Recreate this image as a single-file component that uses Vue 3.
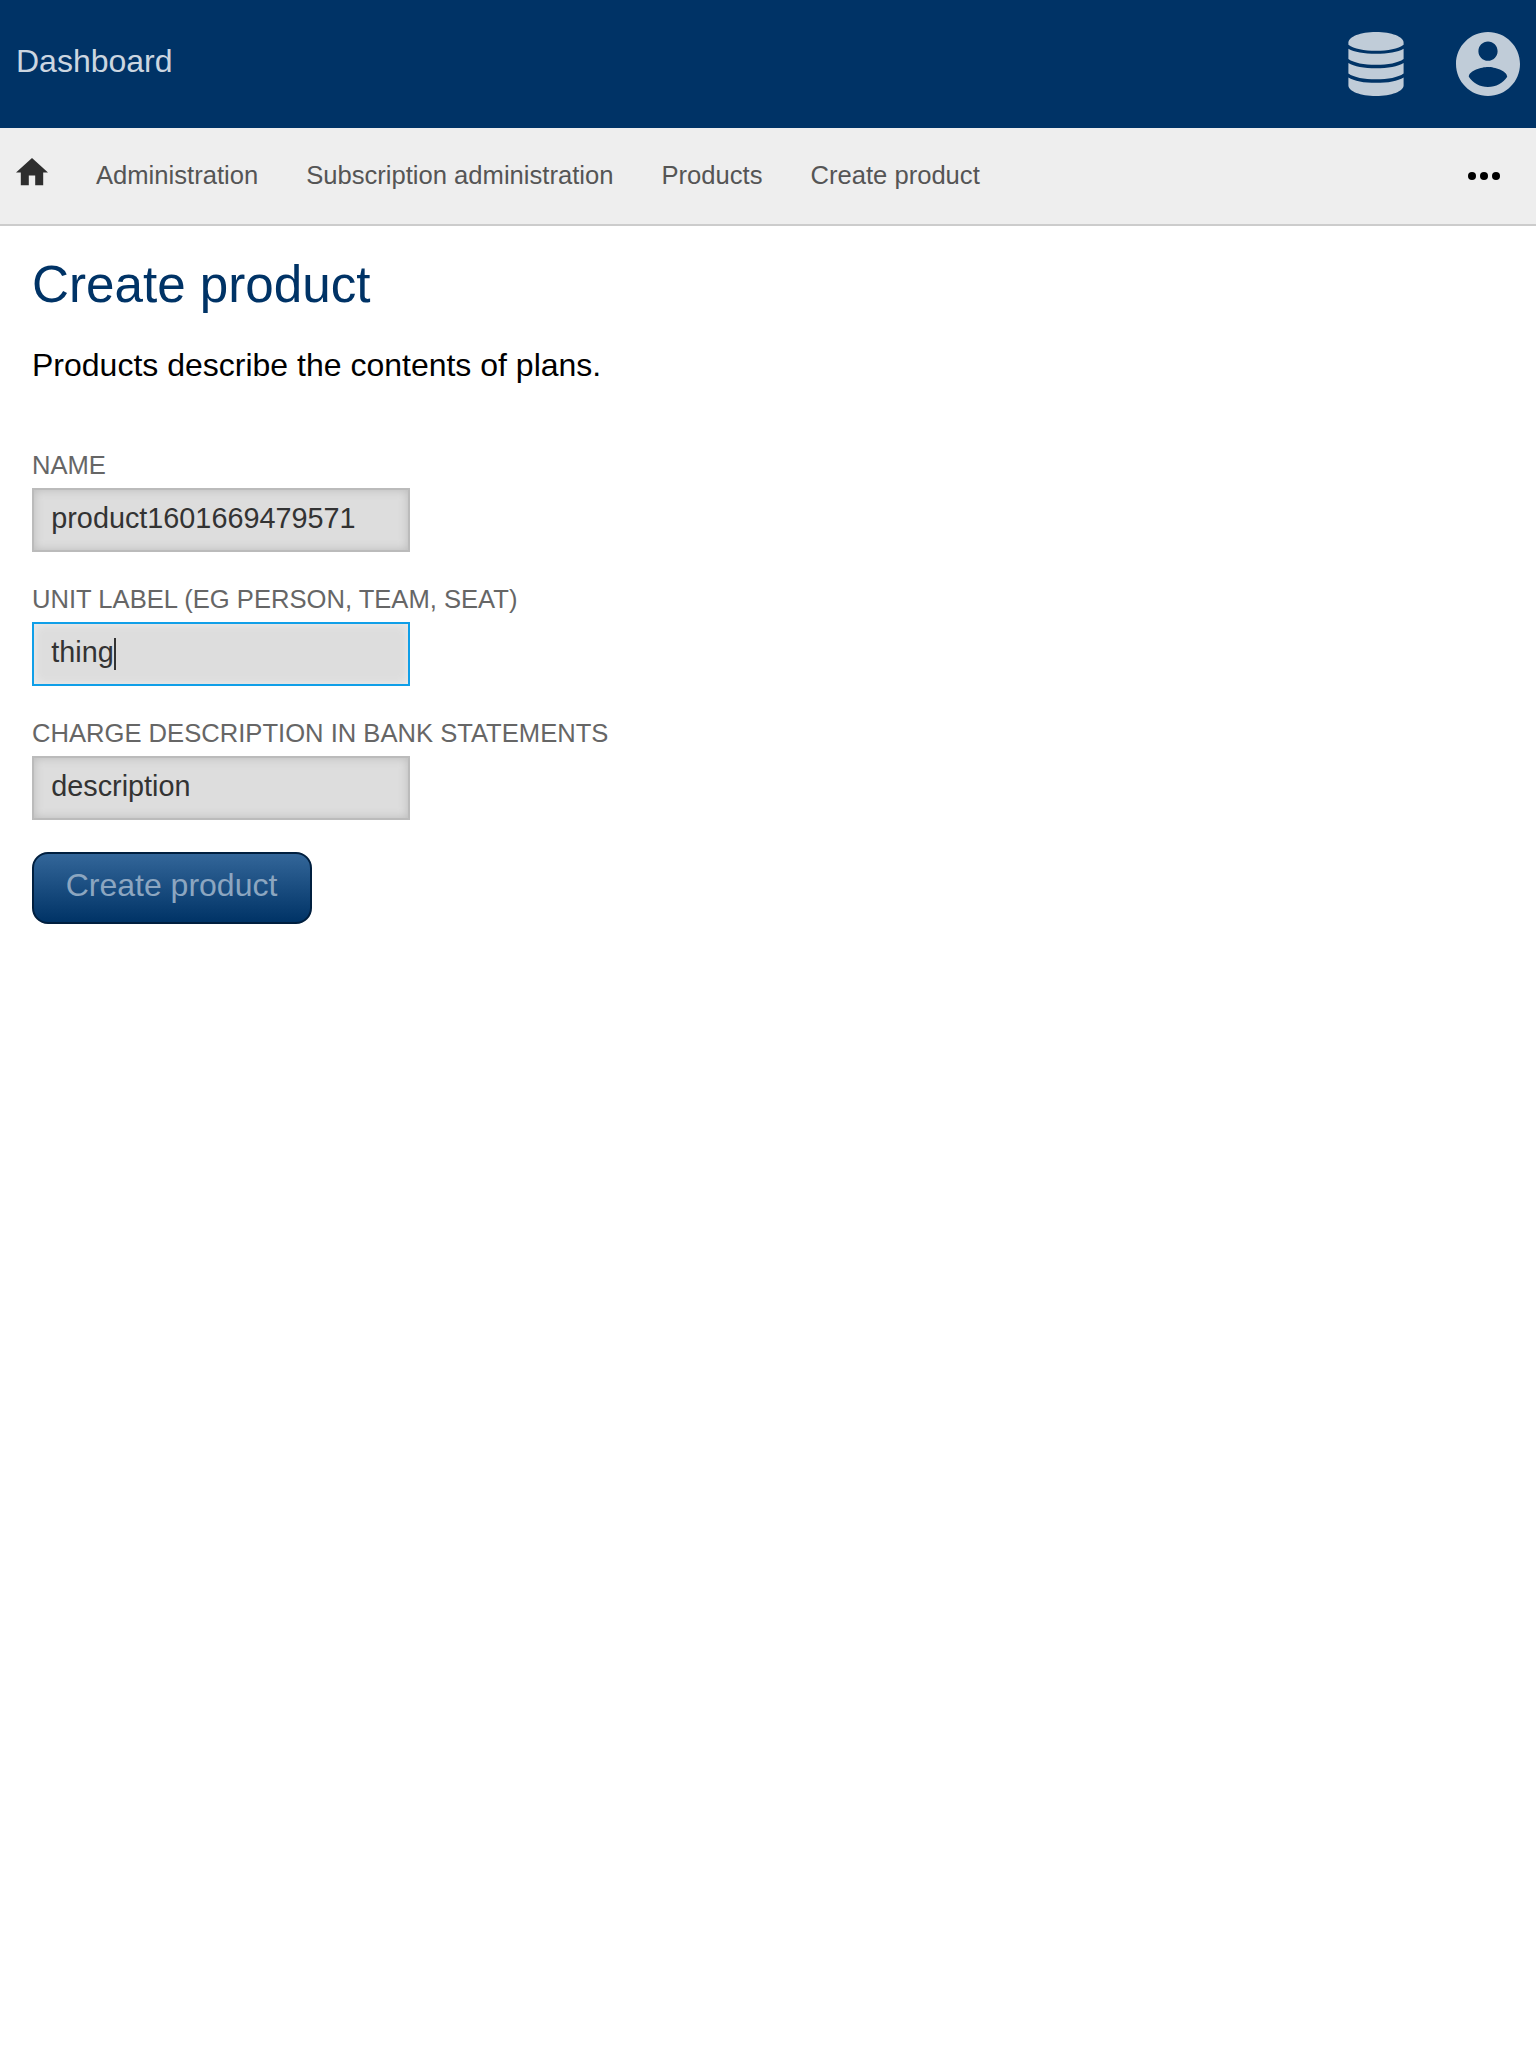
<script setup>
const crumbs = ['Administration', 'Subscription administration', 'Products', 'Create product']
const fields = [
  { id: 'name', label: 'Name', value: 'product1601669479571' },
  { id: 'unit', label: 'Unit label (eg person, team, seat)', value: 'thing', focused: true },
  { id: 'statement', label: 'Charge description in bank statements', value: 'description' },
]
</script>

<template>
  <div class="page">
    <header class="topbar">
      <a class="brand">Dashboard</a>
      <div class="tools">
        <svg class="db" viewBox="0 0 56 64" aria-hidden="true">
          <path d="M28 0C12.500 0 .4 4.800.4 10.500v2.200C6 16.700 16 18.700 28 18.700s22-2 27.600-6v-2.200C55.600 4.800 43.500 0 28 0z" />
          <path d="M.4 16.800C6 20 16 21.800 28 21.800s22-1.800 27.600-5V27C50 31 40 32.800 28 32.800S6 31 .4 27z" />
          <path d="M.4 31C6 34.500 16 36.300 28 36.300S50 34.500 55.600 31V41.500C50 45.500 40 47.300 28 47.300S6 45.500 .4 41.500z" />
          <path d="M.4 45.400C6 49 16 50.800 28 50.800s22-1.800 27.600-5.400V53.500C55.600 59.200 43.500 64 28 64S.4 59.200.4 53.500z" />
        </svg>
        <svg class="account" viewBox="2 2 20 20" aria-hidden="true">
          <path d="M12 2C6.480 2 2 6.480 2 12s4.480 10 10 10 10-4.480 10-10S17.520 2 12 2zm0 3c1.660 0 3 1.340 3 3s-1.340 3-3 3-3-1.340-3-3 1.340-3 3-3zm0 14.200c-2.500 0-4.710-1.280-6-3.220.03-1.990 4-3.080 6-3.080 1.990 0 5.970 1.090 6 3.080-1.290 1.940-3.500 3.220-6 3.220z" />
        </svg>
      </div>
    </header>
    <nav class="crumbs">
      <svg class="home" viewBox="2 3 20 17" aria-hidden="true">
        <path d="M10 20v-6h4v6h5v-8h3L12 3 2 12h3v8z" />
      </svg>
      <a v-for="c in crumbs" :key="c">{{ c }}</a>
      <svg class="more" viewBox="0 0 32 8" aria-hidden="true">
        <circle cx="4" cy="4" r="4" /><circle cx="16" cy="4" r="4" /><circle cx="28" cy="4" r="4" />
      </svg>
    </nav>
    <main>
      <h1>Create product</h1>
      <p>Products describe the contents of plans.</p>
      <form>
        <div v-for="f in fields" :key="f.id" class="field">
          <label>{{ f.label }}</label>
          <div class="input" :class="{ focused: f.focused }">{{ f.value }}<span v-if="f.focused" class="caret"></span></div>
        </div>
        <button type="button">Create product</button>
      </form>
    </main>
  </div>
</template>

<style>
body { margin: 0; background: #fff; }
</style>

<style scoped>
.page { min-height: 2048px; font-family: "Liberation Sans", Arial, sans-serif; font-size: 32px; color: #000; }
.topbar { box-sizing: border-box; height: 128px; padding: 32px 16px; display: flex; justify-content: space-between; background: #003366; }
.brand { line-height: 36px; padding-top: 11px; color: #ccd6e0; }
.tools { display: flex; gap: 52px; fill: #c0ccd8; }
.db { width: 56px; height: 64px; }
.account { width: 64px; height: 64px; }
.crumbs { box-sizing: border-box; height: 98px; padding: 0 36px 0 16px; display: flex; align-items: center; gap: 48px; background: #eee; border-bottom: 2px solid #ccc; font-size: 25.6px; color: #555; }
.crumbs a { line-height: 30px; padding-bottom: 2px; white-space: nowrap; }
.home { width: 32px; height: 27.2px; fill: #2e2e2e; margin-bottom: 8px; }
.more { width: 32px; height: 8px; margin-left: auto; }
main { padding: 27px 32px 0; }
h1 { margin: 0; font-size: 51.2px; font-weight: 400; line-height: 64px; color: #003366; }
p { margin: 29px 0 0; line-height: 38px; }
form { margin-top: 66px; }
.field { height: 134px; }
label { display: block; height: 38px; line-height: 30px; font-size: 25.6px; text-transform: uppercase; color: #666; }
.input { box-sizing: border-box; width: 378px; height: 64px; padding: 0 17.28px 4px; border: 2px solid #bbb; background: #ddd; box-shadow: inset 0 0 10px #bbb; display: flex; align-items: center; font-size: 28.8px; line-height: 56px; color: #333; }
.input.focused { border-color: #109fe8; box-shadow: inset 0 0 10px #eee; }
.caret { width: 2px; height: 32px; margin-top: 4px; background: #333; }
button { display: block; box-sizing: border-box; width: 280px; height: 72px; padding: 0 1px 6px 0; border: 2px solid #001f3f; border-radius: 16px; background: linear-gradient(#336699, #003366); font: 32px "Liberation Sans", Arial, sans-serif; color: #8ca6c0; }
</style>
